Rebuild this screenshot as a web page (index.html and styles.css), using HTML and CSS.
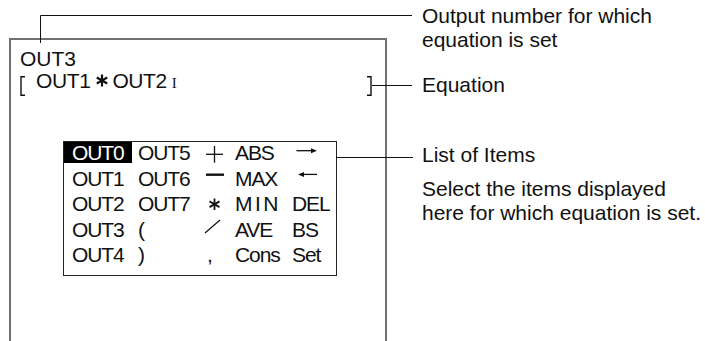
FILE: index.html
```html
<!DOCTYPE html>
<html lang="en">
<head>
    <meta charset="UTF-8">
    <meta name="viewport" content="width=device-width, initial-scale=1.0">
    <title>Equation Setting</title>
    <link rel="stylesheet" href="styles.css">
</head>
<body>

<div class="figure">
    <div class="screen">
        <div class="target">OUT3</div>

        <div class="equation">
            <svg class="bracket" width="6" height="20" viewBox="0 0 6 20"><path d="M5 0.75 H1 V19.25 H5" stroke="#111" stroke-width="1.4" fill="none"/></svg>
            <span class="expr">OUT1<svg class="star" width="14" height="13" viewBox="0 0 14 13"><g stroke="#111" stroke-width="2.2"><line x1="7" y1="0.5" x2="7" y2="12.5"/><line x1="1.8" y1="3.5" x2="12.2" y2="9.5"/><line x1="1.8" y1="9.5" x2="12.2" y2="3.5"/></g></svg>OUT2<span class="cursor">I</span></span>
            <svg class="bracket close" width="6" height="20" viewBox="0 0 6 20"><path d="M1 0.75 H5 V19.25 H1" stroke="#111" stroke-width="1.4" fill="none"/></svg>
        </div>

        <!-- list of items -->
        <div class="items">
            <div class="cell c1"><span class="sel">OUT0</span></div>
            <div class="cell c2">OUT5</div>
            <div class="cell c3"><svg width="26" height="21" viewBox="0 0 26 21"><g stroke="#111" stroke-width="1.3"><line x1="4" y1="12.3" x2="21" y2="12.3"/><line x1="12.5" y1="4" x2="12.5" y2="20.7"/></g></svg></div>
            <div class="cell c4">ABS</div>
            <div class="cell c5"><svg width="50" height="21" viewBox="0 0 50 21"><line x1="10.5" y1="8.7" x2="27" y2="8.7" stroke="#111" stroke-width="1.3"/><path d="M25 6.2 L31 8.7 L25 11.2 Z" fill="#111"/></svg></div>

            <div class="cell c1">OUT1</div>
            <div class="cell c2">OUT6</div>
            <div class="cell c3"><svg width="26" height="21" viewBox="0 0 26 21"><line x1="4" y1="6.7" x2="22" y2="6.7" stroke="#111" stroke-width="2.4"/></svg></div>
            <div class="cell c4">MAX</div>
            <div class="cell c5"><svg width="50" height="21" viewBox="0 0 50 21"><line x1="15" y1="6.4" x2="31" y2="6.4" stroke="#111" stroke-width="1.3"/><path d="M18 3.9 L12 6.4 L18 8.9 Z" fill="#111"/></svg></div>

            <div class="cell c1">OUT2</div>
            <div class="cell c2">OUT7</div>
            <div class="cell c3"><svg width="26" height="21" viewBox="0 0 26 21"><g stroke="#111" stroke-width="1.8"><line x1="12.5" y1="5.5" x2="12.5" y2="17"/><line x1="7.5" y1="8.4" x2="17.5" y2="14.1"/><line x1="7.5" y1="14.1" x2="17.5" y2="8.4"/></g></svg></div>
            <div class="cell c4 spaced">MIN</div>
            <div class="cell c5">DEL</div>

            <div class="cell c1">OUT3</div>
            <div class="cell c2">(</div>
            <div class="cell c3"><svg width="26" height="21" viewBox="0 0 26 21"><line x1="3" y1="14" x2="18" y2="1" stroke="#111" stroke-width="1.2"/></svg></div>
            <div class="cell c4">AVE</div>
            <div class="cell c5">BS</div>

            <div class="cell c1">OUT4</div>
            <div class="cell c2">)</div>
            <div class="cell c3 comma">,</div>
            <div class="cell c4">Cons</div>
            <div class="cell c5">Set</div>
        </div>
    </div>

    <div class="callouts">
        <p class="note note-output">Output number for which<br>equation is set</p>
        <p class="note note-equation">Equation</p>
        <p class="note note-list">List of Items</p>
        <p class="note note-hint">Select the items displayed<br>here for which equation is set.</p>
    </div>

    <!-- leader lines -->
    <svg class="leaders" width="705" height="341" viewBox="0 0 705 341">
        <g stroke="#111" stroke-width="1" fill="none">
            <path d="M40.5 43 V15.5 H412"/>
            <path d="M372 85.5 H412"/>
            <path d="M336 157.5 H413"/>
        </g>
    </svg>
</div>

</body>
</html>
```

FILE: styles.css
```css
body {
    margin: 0;
    background-color: #fff;
    font-family: 'Liberation Sans', Arial, sans-serif;
    color: #111;
}

.figure {
    position: relative;
    display: flex;
    width: 705px;
    height: 341px;
    overflow: hidden;
}

.screen {
    flex-shrink: 0;
    box-sizing: border-box;
    width: 378px;
    height: 330px;
    margin: 38px 0 0 9px;
    padding: 6px 0 0 9px;
    border: 2px solid #707070;
    border-bottom: none;
    font-size: 21px;
}

.target {
    line-height: 25px;
}

.equation {
    display: flex;
    align-items: flex-end;
    height: 25px;
    line-height: 25px;
    padding-right: 13px;
}

.bracket {
    flex-shrink: 0;
}

.bracket.close {
    margin-left: auto;
}

.expr {
    margin-left: 10px;
    letter-spacing: -0.4px;
}

.star {
    margin: 0 3px 0 5px;
    vertical-align: 1px;
}

.cursor {
    margin-left: 5px;
    font-family: 'Liberation Serif', 'Times New Roman', serif;
    font-size: 15px;
}

.items {
    display: grid;
    grid-template-columns: 68px 70px 26px 58px 50px;
    row-gap: 4.6px;
    width: max-content;
    margin: 45px 0 0 43px;
    padding-bottom: 9.5px;
    border: 1px solid #222;
    font-size: 21px;
    line-height: 21px;
    letter-spacing: -1.1px;
}

.cell {
    height: 21px;
    white-space: nowrap;
}

.cell svg {
    display: block;
}

.c1 { padding-left: 8px; }
.c2 { padding-left: 6px; }
.c4 { padding-left: 7px; }
.c5 { padding-left: 6px; }
.c5 svg { margin-left: -6px; }

.c1:has(.sel) {
    padding-left: 0;
}

.sel {
    display: block;
    height: 21px;
    padding-left: 8px;
    background-color: #000;
    color: #fff;
}

.comma {
    padding-left: 5px;
}

.spaced {
    letter-spacing: 2.5px;
}

.callouts {
    margin-left: 35px;
}

.note {
    margin: 0;
    font-size: 21px;
    line-height: 24px;
    white-space: nowrap;
}

.note-output { margin-top: 4px; }
.note-equation { margin-top: 20.7px; }
.note-list { margin-top: 46px; }
.note-hint { margin-top: 10px; }

.leaders {
    position: absolute;
    top: 0;
    left: 0;
    pointer-events: none;
}
```
